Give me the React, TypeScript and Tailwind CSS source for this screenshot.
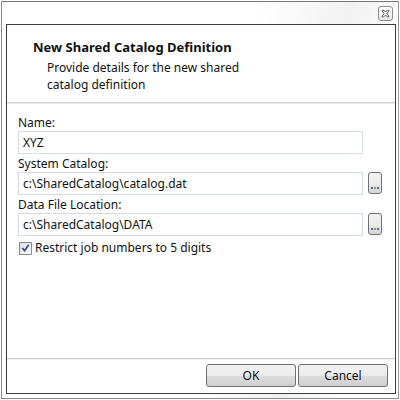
import React from "react";

const font = { fontFamily: '"Noto Sans", "Open Sans", sans-serif' };

function CloseButton() {
  return (
    <div className="w-[15px] h-[15px] rounded-[3px] border border-[#8d8d8d] bg-gradient-to-b from-[#ffffff] to-[#e6e6e6] flex items-center justify-center">
      <svg width="9" height="9" viewBox="0 0 9 9">
        <path
          d="M1 1.5 L2.5 1 L4.5 3 L6.5 1 L8 1.5 L6 4.5 L8 7.5 L6.5 8 L4.5 6 L2.5 8 L1 7.5 L3 4.5 Z"
          fill="#ffffff"
          stroke="#4b4b4b"
          strokeWidth="0.9"
          strokeLinejoin="round"
        />
      </svg>
    </div>
  );
}

function TextBox({ value }: { value: string }) {
  return (
    <div className="w-[345px] h-[23px] border border-[#d5dbe3] bg-white flex items-center pl-[4px] text-[12px] text-[#111111]">
      {value}
    </div>
  );
}

function BrowseButton() {
  return (
    <div className="ml-[5px] w-[14px] h-[22px] rounded-[3px] border border-[#707070] bg-gradient-to-b from-[#f3f3f3] via-[#ebebeb] to-[#d4d4d4] flex items-end justify-center pb-[4px]">
      <div className="flex gap-[1px]">
        <span className="w-[2px] h-[2px] bg-[#3d6fb6]" />
        <span className="w-[2px] h-[2px] bg-[#c08a2a]" />
        <span className="w-[2px] h-[2px] bg-[#3d6fb6]" />
      </div>
    </div>
  );
}

function Field({ label, value, browse }: { label: string; value: string; browse?: boolean }) {
  return (
    <div className="flex flex-col mb-[1px]">
      <div className="h-[17px] leading-[17px] text-[12px] text-[#111111]">{label}</div>
      <div className="flex items-start">
        <TextBox value={value} />
        {browse && <BrowseButton />}
      </div>
    </div>
  );
}

function DialogButton({ children }: { children: React.ReactNode }) {
  return (
    <div className="w-[90px] h-[23px] rounded-[3px] border border-[#707070] bg-[linear-gradient(to_bottom,#f2f2f2_0%,#ebebeb_50%,#dddddd_50%,#cfcfcf_100%)] flex items-center justify-center text-[12px] text-[#111111]">
      {children}
    </div>
  );
}

export default function App() {
  return (
    <div className="w-[400px] h-[400px] bg-white pt-[1px] pl-[1px]" style={font}>
      <div className="w-[398px] h-[398px] border border-t-[#767676] border-l-[#8a8a8a] border-r-[#9a9a9a] border-b-[#8a8a8a] bg-[linear-gradient(100deg,#ffffff_0%,#ffffff_55%,#f1f1f1_75%,#ffffff_90%)] flex flex-col">
        <div className="h-[22px] flex justify-end pt-[4px] pr-[5px]">
          <CloseButton />
        </div>
        <div className="ml-[4px] w-[390px] h-[370px] border border-[#3c3c3c] bg-white flex flex-col">
          <div className="h-[77px] pt-[14px]">
            <div className="pl-[26px] text-[13px] font-bold leading-[16px] text-[#111111]">
              New Shared Catalog Definition
            </div>
            <div className="pl-[40px] pt-[5px] text-[12px] leading-[16.5px] text-[#111111]">
              <div>Provide details for the new shared</div>
              <div>catalog definition</div>
            </div>
          </div>
          <div className="h-px bg-[#d0d0d0]" />
          <div className="h-px bg-[#ececec]" />
          <div className="flex-1 pl-[11px] pt-[10px]">
            <Field label="Name:" value="XYZ" />
            <Field label="System Catalog:" value="c:\SharedCatalog\catalog.dat" browse />
            <Field label="Data File Location:" value="c:\SharedCatalog\DATA" browse />
            <div className="flex items-center h-[16px] mt-[4px] pl-[1px] gap-[3px]">
              <div className="w-[13px] h-[13px] border border-[#8e8f8f] bg-gradient-to-br from-[#cfd4dc] to-[#f4f6f9] p-[1px]">
                <div className="w-full h-full bg-gradient-to-br from-[#dfe4ec] to-[#fbfcfd] flex items-center justify-center">
                  <svg width="10" height="10" viewBox="0 0 10 10">
                    <path d="M1.5 5 L4 8 L8.5 1.5" fill="none" stroke="#3b4f8f" strokeWidth="2" />
                  </svg>
                </div>
              </div>
              <span className="text-[12px] text-[#111111]">Restrict job numbers to 5 digits</span>
            </div>
          </div>
          <div className="h-px bg-[#d0d0d0]" />
          <div className="h-px bg-[#f0f0f0]" />
          <div className="h-[33px] flex justify-end items-start pt-[4px] pr-[7px] gap-[2px]">
            <DialogButton>OK</DialogButton>
            <DialogButton>Cancel</DialogButton>
          </div>
        </div>
      </div>
    </div>
  );
}
